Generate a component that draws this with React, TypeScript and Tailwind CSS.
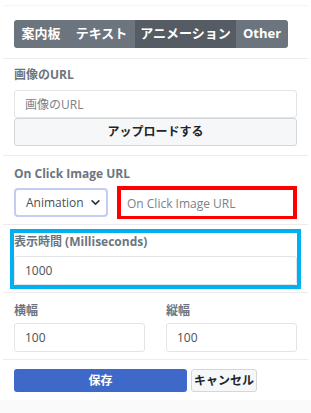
import React from "react";

const font = { fontFamily: '"Open Sans", "Noto Sans CJK JP", sans-serif' };

function Divider() {
  return <div className="mx-[3px] h-px bg-[#ececec]" />;
}

function Label({ children }: { children: React.ReactNode }) {
  return (
    <div className="text-[12px] font-bold leading-[18px] text-[#6c757d]">
      {children}
    </div>
  );
}

function Field({ value, placeholder, h = "h-[29px]" }: { value?: string; placeholder?: string; h?: string }) {
  return (
    <input
      readOnly
      value={value}
      placeholder={placeholder}
      className={`${h} w-full rounded-[3px] border border-[#e1e4e8] bg-white px-[10px] text-[12px] text-[#495057] placeholder:text-[#7c8288] outline-none`}
    />
  );
}

export default function App() {
  const tabs = [
    { label: "案内板", w: "w-[54px]" },
    { label: "テキスト", w: "w-[67px]" },
    { label: "アニメーション", w: "w-[101px]", active: true },
    { label: "Other", w: "w-[52px]" },
  ];

  return (
    <div className="flex h-[413px] w-[311px] flex-col overflow-hidden bg-white" style={font}>
      <div className="mx-[3px] mt-[5px] h-px bg-[#f6f6f6]" />
      <div className="px-[14px] pt-[14px] pb-[10px]">
        <div className="flex h-[28px] w-fit overflow-hidden rounded-[3px] bg-[#6c757d]">
          {tabs.map((t) => (
            <div
              key={t.label}
              className={`${t.w} flex items-center justify-center text-[13px] font-bold text-white ${
                t.active ? "bg-[#555c63]" : ""
              }`}
            >
              {t.label}
            </div>
          ))}
        </div>
      </div>

      <Divider />

      <div className="px-[14px] pt-[7px] pb-[9px]">
        <Label>画像のURL</Label>
        <div className="mt-[6px]">
          <Field placeholder="画像のURL" h="h-[28px]" />
          <button className="h-[28px] w-full rounded-[3px] border border-[#d4d7da] bg-[#f6f7f8] text-[12px] font-bold text-[#212529]">
            アップロードする
          </button>
        </div>
      </div>

      <Divider />

      <div className="px-[14px] pt-[9px] pb-[5px]">
        <Label>On Click Image URL</Label>
        <div className="mt-[3px] flex items-center gap-[9px]">
          <div className="flex h-[29px] w-[94px] shrink-0 items-center justify-between rounded-[4px] border-2 border-[#c3cdf3] bg-white pl-[10px] pr-[6px] text-[12px] text-[#495057]">
            <span>Animation</span>
            <svg width="9" height="9" viewBox="0 0 16 16" fill="none" stroke="#343a40" strokeWidth="3" strokeLinecap="round" strokeLinejoin="round">
              <path d="M2 5l6 6 6-6" />
            </svg>
          </div>
          <div className="h-[33px] flex-1 border-4 border-[#ff0000] bg-white">
            <input
              readOnly
              placeholder="On Click Image URL"
              className="h-full w-full bg-white px-[6px] text-[12px] placeholder:text-[#7c8288] outline-none"
            />
          </div>
        </div>
      </div>

      <Divider />

      <div className="px-[10px] pt-[4px] pb-[3px]">
        <div className="border-4 border-[#00b0f0]">
          <Label>表示時間 (Milliseconds)</Label>
          <div className="mt-[5px]">
            <Field value="1000" />
          </div>
        </div>
      </div>

      <Divider />

      <div className="grid grid-cols-2 gap-[21px] px-[14px] pt-[9px] pb-[7px]">
        <div>
          <Label>横幅</Label>
          <div className="mt-[3px]">
            <Field value="100" />
          </div>
        </div>
        <div>
          <Label>縦幅</Label>
          <div className="mt-[3px]">
            <Field value="100" />
          </div>
        </div>
      </div>

      <Divider />

      <div className="flex gap-[4px] px-[14px] pt-[9px] pb-[8px]">
        <button className="h-[23px] w-[173px] rounded-[3px] bg-[#3f69c8] text-[12px] font-bold text-white">
          保存
        </button>
        <button className="h-[23px] w-[66px] rounded-[3px] border border-[#d4d7da] bg-[#f6f7f8] text-[12px] font-bold text-[#212529]">
          キャンセル
        </button>
      </div>
      <div className="flex-1 bg-[#fafafa]" />
    </div>
  );
}
